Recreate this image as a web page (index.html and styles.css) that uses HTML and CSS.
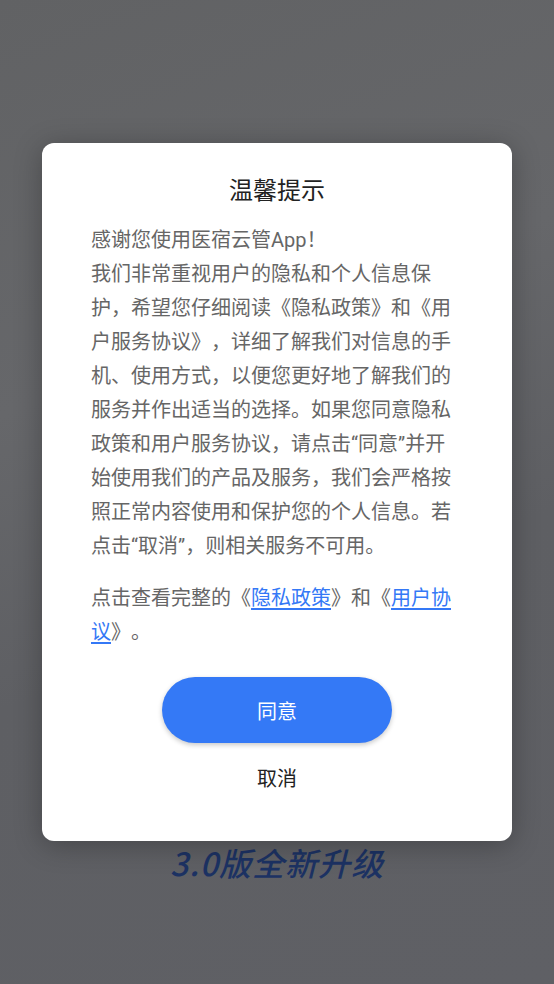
FILE: index.html
```html
<!DOCTYPE html>
<html lang="zh-CN">
<head>
<meta charset="utf-8">
<title>温馨提示</title>
<link rel="stylesheet" href="styles.css">
</head>
<body>
<div class="screen">
  <div class="page">
    <div class="headline">3.0版全新升级</div>
  </div>
  <div class="overlay">
    <div class="dialog">
      <div class="title">温馨提示</div>
      <div class="content">
        <p class="para">感谢您使用医宿云管App！<br>我们非常重视用户的隐私和个人信息保护，希望您仔细阅读《隐私政策》和《用户服务协议》，详细了解我们对信息的手机、使用方式，以便您更好地了解我们的服务并作出适当的选择。如果您同意隐私政策和用户服务协议，请点击“同意”并开始使用我们的产品及服务，我们会严格按照正常内容使用和保护您的个人信息。若点击“取消”，则相关服务不可用。</p>
        <p class="para para-links">点击查看完整的《<a class="link" href="#">隐私政策</a>》和《<a class="link" href="#">用户协议</a>》。</p>
      </div>
      <div class="actions">
        <button class="btn-agree">同意</button>
        <button class="btn-cancel">取消</button>
      </div>
    </div>
  </div>
</div>
</body>
</html>
```
FILE: styles.css
```css
* { box-sizing: border-box; }
html, body { margin: 0; padding: 0; }
body {
  width: 554px;
  height: 984px;
  overflow: hidden;
  font-family: "Roboto", "Noto Sans CJK SC", sans-serif;
  background: #5f6064;
}
.screen {
  position: relative;
  width: 554px;
  height: 984px;
  background: linear-gradient(160deg, #616264 0%, #66676a 35%, #5e5f63 60%, #5f6065 100%);
}
.page {
  padding-top: 840px;
  display: flex;
  justify-content: center;
}
.headline {
  font-family: "Noto Sans CJK SC", sans-serif;
  font-weight: 500;
  font-style: italic;
  font-size: 32px;
  line-height: 44px;
  color: #1c3263;
  letter-spacing: 1px;
}
.overlay {
  position: absolute;
  inset: 0;
  display: flex;
  align-items: center;
  justify-content: center;
}
.dialog {
  width: 470px;
  background: #ffffff;
  border-radius: 12px;
  box-shadow: 0 4px 28px rgba(0, 0, 0, 0.28);
  padding: 31px 0 44px;
  display: flex;
  flex-direction: column;
  align-items: center;
}
.title {
  font-size: 24px;
  line-height: 34px;
  color: #222222;
}
.content {
  align-self: stretch;
  padding: 0 49px;
  margin-top: 15px;
}
.para {
  margin: 0;
  font-size: 20px;
  line-height: 34px;
  color: #666666;
  text-spacing-trim: space-all;
}
.para-links {
  margin-top: 18px;
}
.link {
  color: #3478f6;
  text-decoration: underline;
  text-underline-offset: 3px;
}
.actions {
  margin-top: 28px;
  display: flex;
  flex-direction: column;
  align-items: center;
}
.btn-agree {
  width: 230px;
  height: 66px;
  border: none;
  border-radius: 33px;
  background: #3479f6;
  color: #ffffff;
  font-family: inherit;
  font-size: 20px;
  box-shadow: 0 2px 5px rgba(0, 0, 0, 0.22);
  padding: 0;
}
.btn-cancel {
  margin-top: 14px;
  height: 40px;
  border: none;
  background: transparent;
  color: #222222;
  font-family: inherit;
  font-size: 20px;
  padding: 0;
}
```
